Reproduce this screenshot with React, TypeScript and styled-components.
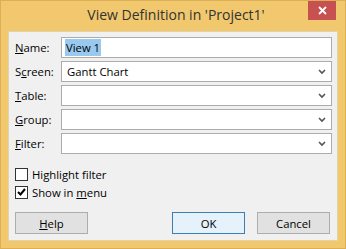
import { createGlobalStyle, styled } from 'styled-components'

const GlobalStyle = createGlobalStyle`
    html, body {
        margin: 0;
        padding: 0;
        background: #f0c870;
    }
    body {
        font-family: 'Open Sans', 'Noto Sans', sans-serif;
        font-size: 11.3px;
        color: #000;
    }
`

const Window = styled.div`
    width: 346px;
    height: 249px;
    box-sizing: border-box;
    background: #f1c86d;
    border: 1px solid #dcae55;
    display: flex;
    flex-direction: column;
`

const TitleBar = styled.div`
    height: 30px;
    display: grid;
    grid-template-columns: 1fr auto 1fr;
    align-items: start;
`

const Title = styled.div`
    grid-column: 2;
    font-size: 14px;
    color: #333;
    line-height: 28px;
    padding-left: 6px;
`

const CloseButton = styled.div`
    grid-column: 3;
    justify-self: end;
    width: 28px;
    height: 19px;
    margin-right: 9px;
    background: #c75050;
    display: flex;
    align-items: center;
    justify-content: center;
`

const Client = styled.div`
    flex: 1;
    margin: 0 7px 7px 7px;
    background: #f0f0f0;
    border: 1px solid #e2d3a9;
    padding: 5px 5px 0 6px;
    display: flex;
    flex-direction: column;
`

const Form = styled.div`
    display: grid;
    grid-template-columns: 46px 1fr;
    grid-auto-rows: 21px;
    row-gap: 3px;
    align-items: center;
`

const Label = styled.label`
    line-height: 21px;
`

const Field = styled.div<{ $combo?: boolean }>`
    height: 21px;
    box-sizing: border-box;
    background: #fff;
    border: 1px solid #acacac;
    display: flex;
    align-items: center;
    padding-left: ${(p) => (p.$combo ? '5px' : '3px')};
    padding-right: 5px;
`

const FieldText = styled.span`
    flex: 1;
`

const Selected = styled.span`
    background: #99c9ef;
    padding: 1px 1px;
`

const Checks = styled.div`
    margin-top: 11px;
    display: flex;
    flex-direction: column;
`

const CheckRow = styled.div`
    height: 18px;
    display: flex;
    align-items: center;
    gap: 4px;
`

const Box = styled.span`
    width: 13px;
    height: 13px;
    box-sizing: border-box;
    border: 1px solid #333;
    background: #fff;
    display: flex;
    align-items: center;
    justify-content: center;
`

const Buttons = styled.div`
    margin-top: 11px;
    margin-right: 2px;
    display: flex;
    gap: 12px;
`

const Button = styled.div<{ $default?: boolean; $push?: boolean }>`
    width: 73px;
    height: 22px;
    box-sizing: border-box;
    display: flex;
    align-items: center;
    justify-content: center;
    background: ${(p) => (p.$default ? '#e5f1fb' : '#e1e1e1')};
    border: 1px solid ${(p) => (p.$default ? '#3c7fb1' : '#adadad')};
    margin-right: ${(p) => (p.$push ? 'auto' : '0')};
`

function Chevron() {
    return (
        <svg width="8" height="6" viewBox="0 0 8 6">
            <polyline points="1,1 4,4 7,1" fill="none" stroke="#555" strokeWidth="1.6" />
        </svg>
    )
}

export default function App() {
    return (
        <>
            <GlobalStyle />
            <Window>
                <TitleBar>
                    <Title>View Definition in 'Project1'</Title>
                    <CloseButton>
                        <svg width="9" height="9" viewBox="0 0 9 9">
                            <path d="M1 1L8 8M8 1L1 8" stroke="#fff" strokeWidth="1.8" />
                        </svg>
                    </CloseButton>
                </TitleBar>
                <Client>
                    <Form>
                        <Label><u>N</u>ame:</Label>
                        <Field>
                            <FieldText><Selected>View 1</Selected></FieldText>
                        </Field>
                        <Label>S<u>c</u>reen:</Label>
                        <Field $combo>
                            <FieldText>Gantt Chart</FieldText>
                            <Chevron />
                        </Field>
                        <Label><u>T</u>able:</Label>
                        <Field $combo>
                            <FieldText />
                            <Chevron />
                        </Field>
                        <Label><u>G</u>roup:</Label>
                        <Field $combo>
                            <FieldText />
                            <Chevron />
                        </Field>
                        <Label><u>F</u>ilter:</Label>
                        <Field $combo>
                            <FieldText />
                            <Chevron />
                        </Field>
                    </Form>
                    <Checks>
                        <CheckRow>
                            <Box />
                            <span>Hi<u>g</u>hlight filter</span>
                        </CheckRow>
                        <CheckRow>
                            <Box>
                                <svg width="9" height="8" viewBox="0 0 9 8">
                                    <path d="M1 4L3.5 6.5L8 1" fill="none" stroke="#000" strokeWidth="2" />
                                </svg>
                            </Box>
                            <span>Show in <u>m</u>enu</span>
                        </CheckRow>
                    </Checks>
                    <Buttons>
                        <Button $push><u>H</u>elp</Button>
                        <Button $default>OK</Button>
                        <Button>Cancel</Button>
                    </Buttons>
                </Client>
            </Window>
        </>
    )
}
